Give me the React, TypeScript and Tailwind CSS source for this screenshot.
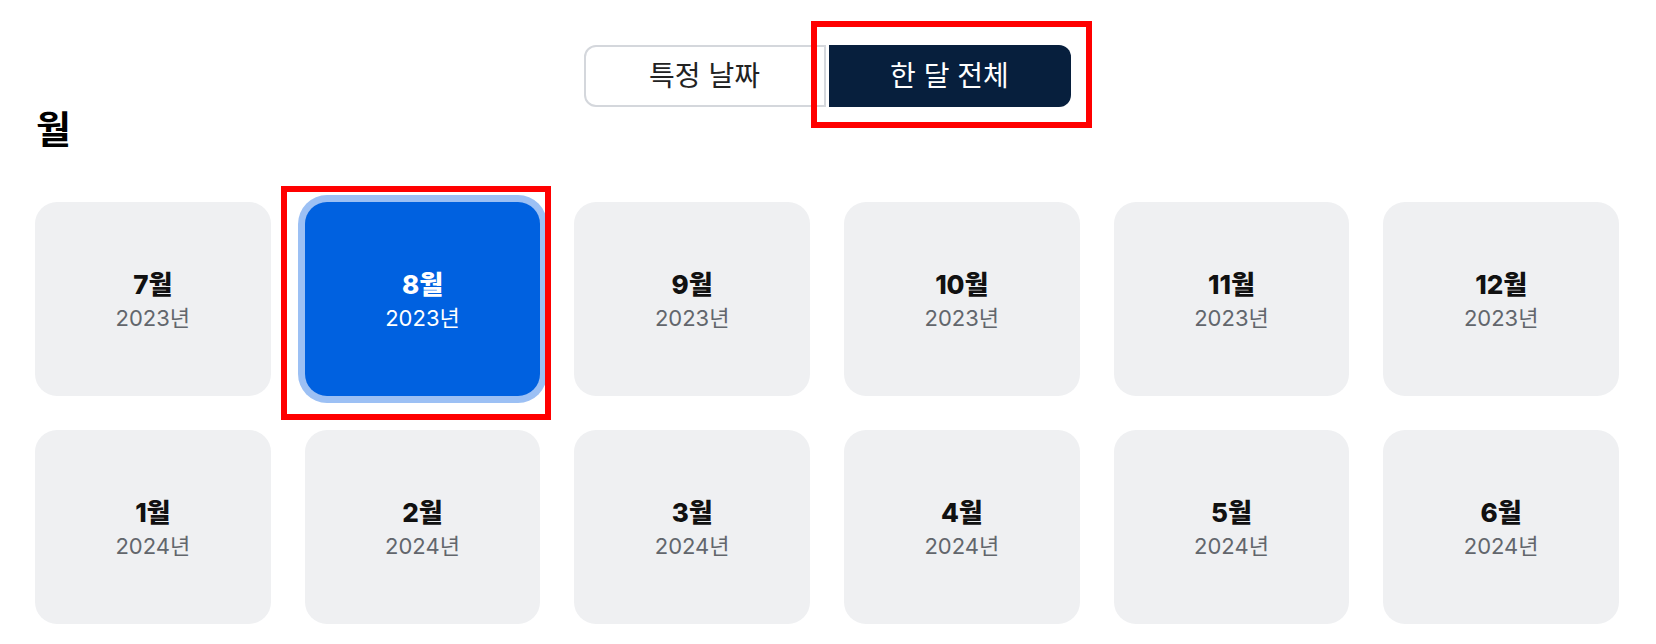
import React, { useState } from "react";

const months = [
  { month: 7, year: 2023 },
  { month: 8, year: 2023 },
  { month: 9, year: 2023 },
  { month: 10, year: 2023 },
  { month: 11, year: 2023 },
  { month: 12, year: 2023 },
  { month: 1, year: 2024 },
  { month: 2, year: 2024 },
  { month: 3, year: 2024 },
  { month: 4, year: 2024 },
  { month: 5, year: 2024 },
  { month: 6, year: 2024 },
];

const App: React.FC = () => {
  const [mode, setMode] = useState<"day" | "month">("month");
  const [selected, setSelected] = useState("2023-8");

  return (
    <div
      className="min-h-screen bg-white pl-[35px] pr-[37px] pt-[45px] pb-[20px]"
      style={{ fontFamily: "Inter, 'Noto Sans CJK KR', sans-serif" }}
    >
      {/* Toggle */}
      <div className="relative flex justify-center gap-[3px]">
        <button
          onClick={() => setMode("day")}
          className={`h-[62px] w-[242px] rounded-l-[12px] border-2 text-[28px] ${
            mode === "day"
              ? "border-[#071f3d] bg-[#071f3d] text-white"
              : "border-[#d4d7dc] bg-white text-[#222]"
          }`}
        >
          특정 날짜
        </button>
        <div className="relative">
          <button
            onClick={() => setMode("month")}
            className={`h-[62px] w-[242px] rounded-r-[12px] text-[28px] ${
              mode === "month"
                ? "bg-[#071f3d] text-white"
                : "border-2 border-[#d4d7dc] bg-white text-[#222]"
            }`}
          >
            한 달 전체
          </button>
          {/* annotation box */}
          <div className="pointer-events-none absolute left-[-18px] top-[-24px] h-[107px] w-[281px] border-[6px] border-[#ff0000]" />
        </div>
      </div>

      {/* Heading */}
      <h2 className="ml-[1px] text-[38px] font-bold leading-[44px] text-black">월</h2>

      {/* Month grid */}
      <div className="mt-[51px] grid grid-cols-6 gap-x-[34px] gap-y-[34px]">
        {months.map((m) => {
          const key = `${m.year}-${m.month}`;
          const active = key === selected;
          return (
            <div key={key} className="relative">
              <button
                onClick={() => setSelected(key)}
                className={`flex h-[194px] w-full flex-col items-center justify-center rounded-[22px] pt-[4px] ${
                  active
                    ? "bg-[#0061e0] ring-[7px] ring-[#9cc0f4]"
                    : "bg-[#eff0f2]"
                }`}
              >
                <span
                  className={`text-[26px] font-extrabold leading-[32px] ${
                    active ? "text-white" : "text-[#111]"
                  }`}
                >
                  {m.month}월
                </span>
                <span
                  className={`mt-[3px] text-[22px] leading-[29px] ${
                    active ? "text-white" : "text-[#62666c]"
                  }`}
                >
                  {m.year}년
                </span>
              </button>
              {active && (
                <div className="pointer-events-none absolute left-[-24px] top-[-16px] h-[234px] w-[270px] border-[6px] border-[#ff0000]" />
              )}
            </div>
          );
        })}
      </div>
    </div>
  );
};

export default App;
